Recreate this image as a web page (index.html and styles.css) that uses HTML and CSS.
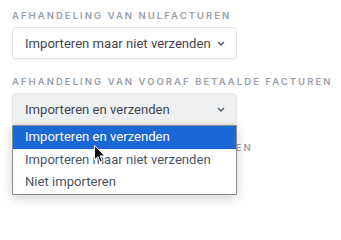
FILE: index.html
```html
<!DOCTYPE html>
<html lang="nl">
<head>
<meta charset="utf-8">
<link rel="stylesheet" href="styles.css">
</head>
<body>
<div class="form">
  <div class="field">
    <div class="label">Afhandeling van nulfacturen</div>
    <div class="select">
      <span class="value">Importeren maar niet verzenden</span>
      <svg class="chev" width="8" height="5" viewBox="0 0 8 5"><path d="M1 1l3 3 3-3" fill="none" stroke="#4b5563" stroke-width="1.3"/></svg>
    </div>
  </div>
  <div class="field">
    <div class="label">Afhandeling van vooraf betaalde facturen</div>
    <div class="select-wrap">
      <div class="select select-open">
        <span class="value">Importeren en verzenden</span>
        <svg class="chev" width="8" height="5" viewBox="0 0 8 5"><path d="M1 1l3 3 3-3" fill="none" stroke="#4b5563" stroke-width="1.3"/></svg>
      </div>
      <ul class="menu">
        <li class="opt active">Importeren en verzenden</li>
        <li class="opt">Importeren maar niet verzenden</li>
        <li class="opt">Niet importeren</li>
      </ul>
      <svg class="cursor" width="12" height="18" viewBox="0 0 12 18"><path d="M0.5 0.5v14.5l3.4-3.3 2.4 5.4 2.1-0.9-2.3-5.3h4.9z" fill="#111" stroke="#fff" stroke-width="1"/></svg>
    </div>
  </div>
  <div class="field">
    <div class="label">Afhandeling van creditfacturen</div>
    <div class="select"></div>
  </div>
</div>
</body>
</html>
```
FILE: styles.css
```css
html, body {
  margin: 0;
  padding: 0;
  background: #ffffff;
}
body {
  min-height: 208px;
  font-family: Roboto, "Liberation Sans", sans-serif;
}
.form {
  display: flex;
  flex-direction: column;
  gap: 17px;
  padding: 10px 0 17px 12px;
}
.field {
  display: flex;
  flex-direction: column;
  gap: 5px;
}
.label {
  font-family: Inter, "Liberation Sans", sans-serif;
  font-size: 9.5px;
  font-weight: 600;
  line-height: 12px;
  letter-spacing: 2.05px;
  text-transform: uppercase;
  color: #9a9ea6;
  white-space: nowrap;
}
.select-wrap {
  position: relative;
  z-index: 2;
  width: 225px;
}
.select {
  box-sizing: border-box;
  width: 225px;
  height: 32px;
  display: flex;
  align-items: center;
  justify-content: space-between;
  padding: 0 11px 0 12px;
  border: 1px solid #e3e5e8;
  border-radius: 4px;
  background: #ffffff;
  box-shadow: 0 1px 2px rgba(0, 0, 0, 0.05);
  font-size: 13.1px;
  color: #3f4652;
  white-space: nowrap;
}
.select-open {
  background: #eef0f2;
}
.chev {
  flex: none;
}
.menu {
  position: absolute;
  z-index: 3;
  left: 0;
  top: 32px;
  box-sizing: border-box;
  width: 225px;
  margin: 0;
  padding: 0;
  list-style: none;
  background: #ffffff;
  border: 1px solid #8e8e8e;
  box-shadow: 0 3px 10px rgba(0, 0, 0, 0.18);
}
.opt {
  height: 22.7px;
  line-height: 22.7px;
  padding-left: 12px;
  font-size: 13.1px;
  color: #4a5566;
  white-space: nowrap;
}
.opt.active {
  background: #1b67d5;
  color: #ffffff;
}
.cursor {
  position: absolute;
  z-index: 4;
  left: 82px;
  top: 52px;
}
```
